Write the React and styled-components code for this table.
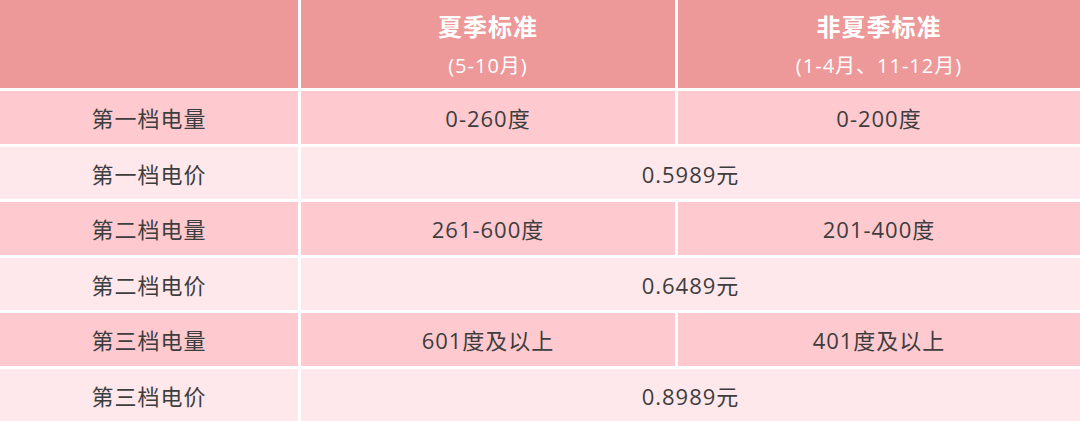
import React from "react";
import styled, { createGlobalStyle } from "styled-components";

const GlobalStyle = createGlobalStyle`
  html, body {
    margin: 0;
    padding: 0;
    background: #ffffff;
  }
  body {
    font-family: "Open Sans", "Noto Sans CJK SC", sans-serif;
  }
`;

const Table = styled.div`
  display: grid;
  grid-template-columns: 298px 374px 1fr;
  grid-template-rows: 88px repeat(6, 1fr);
  gap: 3px;
  width: 1080px;
  height: 421px;
  background: #ffffff;
`;

const Cell = styled.div`
  display: flex;
  flex-direction: column;
  align-items: center;
  justify-content: center;
  font-size: 22px;
  letter-spacing: 1px;
  color: #3d3d3d;
  background: ${(p) => (p.$tone === "dark" ? "#fecacf" : "#ffe8eb")};
  grid-column: ${(p) => (p.$wide ? "span 2" : "auto")};
`;

const HeadCell = styled.div`
  display: flex;
  flex-direction: column;
  align-items: center;
  justify-content: flex-start;
  padding-top: 11px;
  background: #ed999a;
  color: #ffffff;
  letter-spacing: 1px;
`;

const Title = styled.div`
  font-size: 24px;
  font-weight: 700;
  line-height: 32px;
`;

const Sub = styled.div`
  font-size: 20px;
  line-height: 26px;
  margin-top: 10px;
`;

const rows = [
  ["第一档电量", "0-260度", "0-200度"],
  ["第一档电价", "0.5989元"],
  ["第二档电量", "261-600度", "201-400度"],
  ["第二档电价", "0.6489元"],
  ["第三档电量", "601度及以上", "401度及以上"],
  ["第三档电价", "0.8989元"],
];

export default function App() {
  return (
    <>
      <GlobalStyle />
      <Table>
        <HeadCell />
        <HeadCell>
          <Title>夏季标准</Title>
          <Sub>(5-10月)</Sub>
        </HeadCell>
        <HeadCell>
          <Title>非夏季标准</Title>
          <Sub>(1-4月、11-12月)</Sub>
        </HeadCell>
        {rows.map((r, i) => {
          const tone = i % 2 === 0 ? "dark" : "light";
          return (
            <React.Fragment key={r[0]}>
              <Cell $tone={tone}>{r[0]}</Cell>
              {r.length === 3 ? (
                <>
                  <Cell $tone={tone}>{r[1]}</Cell>
                  <Cell $tone={tone}>{r[2]}</Cell>
                </>
              ) : (
                <Cell $tone={tone} $wide>
                  {r[1]}
                </Cell>
              )}
            </React.Fragment>
          );
        })}
      </Table>
    </>
  );
}
